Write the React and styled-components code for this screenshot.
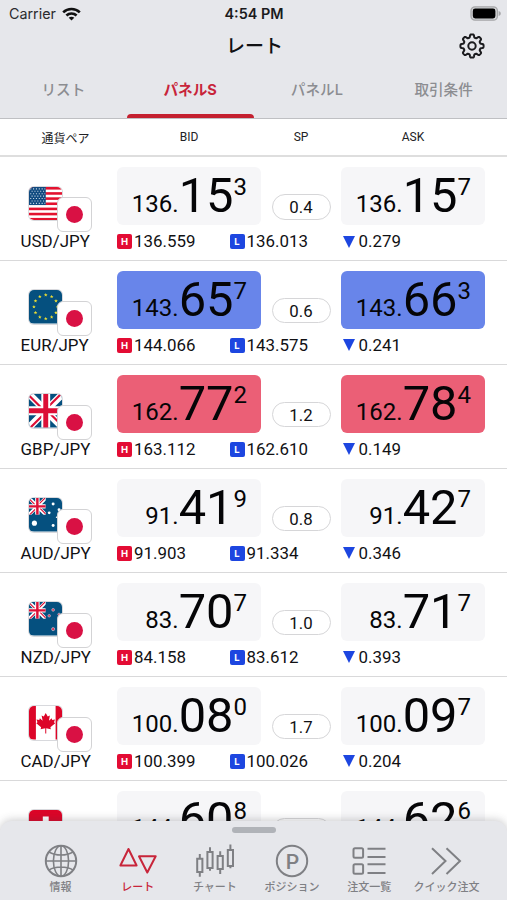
import React from 'react';
import styled, { createGlobalStyle } from 'styled-components';

const GlobalStyle = createGlobalStyle`
    * {
        box-sizing: border-box;
    }

    body {
        margin: 0;
        background: #ffffff;
        font-family: Roboto, 'Noto Sans CJK JP', sans-serif;
        color: #111114;
    }
`;

const Screen = styled.div`
    position: relative;
    width: 507px;
    height: 900px;
    overflow: hidden;
    background: #ffffff;
`;

const Header = styled.header`
    height: 119px;
    background: #e6e7eb;
    border-bottom: 1px solid #bfc0c3;
`;

const StatusBar = styled.div`
    height: 27px;
    padding: 0 6px 0 9px;
    display: grid;
    grid-template-columns: 1fr auto 1fr;
    align-items: center;
    font-family: Inter, sans-serif;
    font-size: 14px;
    line-height: 27px;
`;

const Carrier = styled.span`
    display: flex;
    align-items: center;
    gap: 6px;
    font-size: 14.3px;
    color: #2b2b2e;
`;

const Clock = styled.span`
    font-weight: 600;
    font-size: 14.4px;
    color: #1b1b1d;
    margin-right: 2px;
`;

const BatteryIcon = styled.svg`
    justify-self: end;
`;

const TitleBar = styled.div`
    height: 37px;
    padding: 0 22px;
    display: grid;
    grid-template-columns: 26px 1fr 26px;
    align-items: center;
`;

const Title = styled.h1`
    grid-column: 2;
    margin: 0;
    padding: 1px 0 0 2px;
    text-align: center;
    font-size: 19px;
    font-weight: 500;
    line-height: 37px;
`;

const Tabs = styled.nav`
    height: 54px;
    display: grid;
    grid-template-columns: repeat(4, 1fr);
`;

const Tab = styled.a`
    display: flex;
    flex-direction: column;
    justify-content: space-between;
    text-align: center;
    font-family: Inter, 'Noto Sans CJK JP', sans-serif;
    font-size: 14.6px;
    font-weight: ${(props) => (props.$active ? 700 : 500)};
    line-height: 52px;
    color: ${(props) => (props.$active ? '#c8253a' : '#8c8d91')};

    &::after {
        content: '';
        height: 4px;
        margin-top: -2px;
        border-radius: 4px 4px 0 0;
        background: ${(props) => (props.$active ? '#c4202f' : 'transparent')};
    }
`;

const ColumnHeads = styled.div`
    height: 38px;
    display: grid;
    grid-template-columns: 117px 144px 80px 144px;
    align-items: center;
    text-align: center;
    font-size: 12px;
    color: #222225;
    border-bottom: 2px solid #dedede;

    span:first-child {
        padding-left: 14px;
    }
`;

const Row = styled.div`
    height: 103.95px;
    padding-top: 10px;
    display: grid;
    grid-template-columns: 96px 144px 80px 144px;
    grid-template-rows: 58px 33px;
    padding-left: 21px;
    border-bottom: 1.5px solid #d9d9da;
`;

const Flags = styled.div`
    padding: 19.5px 0 0 7.5px;
    display: flex;
    align-items: flex-start;
`;

const QuoteFlag = styled.span`
    margin: 10.5px 0 0 -5.5px;
    width: 35px;
    height: 35px;
    border: 1.5px solid #d3d3d5;
    border-radius: 6px;
    background: #ffffff;
    display: flex;
    align-items: center;
    justify-content: center;

    &::before {
        content: '';
        width: 17px;
        height: 17px;
        border-radius: 50%;
        background: #d91144;
    }
`;

const tones = {
    flat: '#f6f6f8',
    down: '#6885ea',
    up: '#eb5f76'
};

const Price = styled.div`
    height: 58px;
    padding-right: 14px;
    border-radius: 6px;
    background: ${(props) => tones[props.$tone]};
    display: flex;
    justify-content: flex-end;
    align-items: flex-start;
    color: #050507;
`;

const Base = styled.span`
    font-size: 24px;
    line-height: 28px;
    padding-top: 23px;
`;

const Pips = styled.span`
    font-size: 48.8px;
    line-height: 58px;
`;

const Fraction = styled.span`
    font-size: 24px;
    line-height: 28px;
    padding-top: 6px;
`;

const Spread = styled.span`
    justify-self: center;
    margin-top: 27px;
    width: 59px;
    height: 25.5px;
    border: 1.5px solid #d6d6d8;
    border-radius: 13px;
    text-align: center;
    font-size: 16.8px;
    line-height: 24px;
    background: #ffffff;
`;

const Pair = styled.span`
    font-size: 16.9px;
    line-height: 33px;
    margin-left: -0.4px;
    white-space: nowrap;
`;

const HighLow = styled.div`
    grid-column: 2 / 4;
    display: grid;
    grid-template-columns: 112.5px 1fr;
    line-height: 33px;
`;

const Stat = styled.span`
    display: flex;
    align-items: center;
    gap: ${(props) => props.$gap || 2}px;
    padding-left: ${(props) => props.$indent || 0}px;
    font-size: 16.9px;
    line-height: 33px;
`;

const Badge = styled.i`
    width: 15px;
    height: 15px;
    border-radius: 2px;
    background: ${(props) => props.$color};
    color: #ffffff;
    font: 700 9.5px/15px Inter, sans-serif;
    text-align: center;
`;

const DownMark = styled.i`
    border: 6.2px solid transparent;
    border-top: 12px solid #1d46e0;
    border-bottom: 0;
`;

const BottomSheet = styled.footer`
    position: absolute;
    left: 0;
    right: 0;
    bottom: 0;
    height: 79.5px;
    padding: 6px 22px 0;
    border-radius: 12px 12px 0 0;
    background: #e6e7eb;
    box-shadow: 0 -1px 8px rgba(60, 62, 70, 0.28);
`;

const Handle = styled.div`
    width: 44px;
    height: 6px;
    margin: 0 auto;
    border-radius: 3px;
    background: #b0b3b8;
`;

const Menu = styled.div`
    margin-top: 10px;
    display: grid;
    grid-template-columns: repeat(6, 1fr);
`;

const MenuItem = styled.a`
    display: flex;
    flex-direction: column;
    align-items: center;
    font-size: 11px;
    font-weight: 500;
    line-height: 17px;
    white-space: nowrap;
    color: ${(props) => (props.$active ? '#c8253a' : '#7f8084')};

    svg {
        width: 40px;
        height: 36px;
        fill: none;
        stroke: currentColor;
        stroke-width: 2;
    }
`;

const Wifi = () => (
    <svg width="19" height="14" viewBox="0 0 19 14" fill="none" stroke="#111" strokeWidth="2.6">
        <path d="M1.2 5.4C5.8.9 13.2.9 17.8 5.4" />
        <path d="M4.4 8.5c2.9-2.7 7.3-2.7 10.2 0" />
        <path d="M9.5 13.6 6.7 10.8c1.6-1.4 4-1.4 5.6 0z" fill="#111" stroke="none" />
    </svg>
);

const Battery = () => (
    <BatteryIcon width="31" height="15" viewBox="0 0 31 15">
        <rect x="1" y="0.8" width="26.4" height="13.4" rx="4" fill="#d3d4d6" stroke="#a6a7a9" strokeWidth="1.3" />
        <rect x="2.8" y="2.6" width="22.6" height="9.8" rx="2.4" fill="#000" />
        <path d="M28.6 5v5c1.6-.6 2.2-1.5 2.2-2.5s-.6-1.9-2.2-2.5z" fill="#a6a7a9" />
    </BatteryIcon>
);

// eight rounded teeth around the hub
const gearPath = () => {

    const points = [];

    for (let i = 0; i < 160; i++) {
        const a = (i / 160) * Math.PI * 2;
        const wave = Math.tanh(2.4 * Math.cos(a * 8) + 0.2);
        const r = 10.1 + 1.5 * wave;
        points.push(`${(13 + r * Math.sin(a)).toFixed(2)} ${(13 - r * Math.cos(a)).toFixed(2)}`);
    }

    return `M${points.join('L')}Z`;
};

const Gear = () => (
    <svg width="26" height="26" viewBox="0 0 26 26" fill="none" stroke="#1b1b1e" strokeWidth="2" strokeLinejoin="round">
        <path d={gearPath()} />
        <circle cx="13" cy="13" r="3.7" />
    </svg>
);

const UnionJack = () => (
    <g>
        <rect width="34" height="34" fill="#05507f" />
        <path d="M0 0l34 34M34 0L0 34" stroke="#fff" strokeWidth="7" />
        <path d="M0 1.5l13 13M34 32.5l-13-13M32.5 0l-13 13M1.5 34l13-13" stroke="#dc0f36" strokeWidth="2.2" />
        <path d="M17 0v34M0 17h34" stroke="#fff" strokeWidth="9" />
        <path d="M17 0v34M0 17h34" stroke="#dc0f36" strokeWidth="5" />
    </g>
);

const SouthernFlag = ({ children }) => (
    <g>
        <rect width="34" height="34" fill="#05507f" />
        <svg width="17" height="17" viewBox="0 0 34 34"><UnionJack /></svg>
        {children}
    </g>
);

const flagArt = {
    USD: (
        <g>
            <rect width="34" height="34" fill="#fff" />
            {[0, 1, 2, 3, 4, 5, 6].map((i) => (
                <rect key={i} y={i * 5.23} width="34" height="2.62" fill="#e3122f" />
            ))}
            <rect width="17" height="18.3" fill="#114b80" />
            {[0, 1, 2, 3, 4, 5, 6].map((i) => (
                <path
                    key={i}
                    d={`M${i % 2 ? 2.6 : 1.2} ${1.9 + i * 2.45}H16.5`}
                    stroke="#c5d5e3"
                    strokeWidth="1.1"
                    strokeDasharray="1.1 1.8" />
            ))}
        </g>
    ),
    EUR: (
        <g>
            <rect width="34" height="34" fill="#05507f" />
            {[...Array(12).keys()].map((i) => (
                <path
                    key={i}
                    transform={`translate(${17 + 12 * Math.sin(i * Math.PI / 6)} ${17 - 12 * Math.cos(i * Math.PI / 6)})`}
                    d="M0-1.9L.5-.6 1.9-.5.8.3 1.2 1.6 0 .9-1.2 1.6-.8.3-1.9-.5-.5-.6z"
                    fill="#eadc35" />
            ))}
        </g>
    ),
    GBP: <UnionJack />,
    AUD: (
        <SouthernFlag>
            <g fill="#fff">
                <circle cx="5.5" cy="25.5" r="2.6" />
                <circle cx="24.5" cy="6" r="1.5" />
                <circle cx="30.5" cy="12" r="1.5" />
                <circle cx="20.5" cy="15" r="1.4" />
                <circle cx="28" cy="19.5" r=".8" />
                <circle cx="24.5" cy="28" r="1.5" />
            </g>
        </SouthernFlag>
    ),
    NZD: (
        <SouthernFlag>
            <g fill="#d92c51" stroke="#b9c9d8" strokeWidth=".7">
                <circle cx="24.5" cy="8" r="1.4" />
                <circle cx="30.5" cy="12.5" r="1.2" />
                <circle cx="20.5" cy="14" r="1.3" />
                <circle cx="24.5" cy="27.5" r="1.6" />
            </g>
        </SouthernFlag>
    ),
    CAD: (
        <g>
            <rect width="34" height="34" fill="#fff" />
            <path d="M0 0h7v34H0zM27 0h7v34h-7z" fill="#dc0528" />
            <path
                d="M17 7l2 3.6 2.2-1-1 5.4 2.8-2.6.6 1.7 2.8-.5-1 3 1.2.8-4.9 4.2.5 1.9-4.7-.8V28h-1v-5.3l-4.7.8.5-1.9-4.9-4.2 1.2-.8-1-3 2.8.5.6-1.7 2.8 2.6-1-5.4 2.2 1z"
                fill="#dc0528" />
        </g>
    ),
    CHF: (
        <g>
            <rect width="34" height="34" fill="#dc0528" />
            <path d="M14 6.5h6V14h7.5v6H20v7.5h-6V20H6.5v-6H14z" fill="#fff" />
        </g>
    )
};

const BaseFlag = styled.svg`
    flex: none;
    width: 33.5px;
    height: 33.5px;
    border-radius: 5px;
    box-shadow: 0 0 0 1px rgba(190, 192, 198, 0.6);
`;

const rates = [
    { code: 'USD', tone: 'flat', bid: ['136.', '15', '3'], sp: '0.4', ask: ['136.', '15', '7'], high: '136.559', low: '136.013', diff: '0.279' },
    { code: 'EUR', tone: 'down', bid: ['143.', '65', '7'], sp: '0.6', ask: ['143.', '66', '3'], high: '144.066', low: '143.575', diff: '0.241' },
    { code: 'GBP', tone: 'up', bid: ['162.', '77', '2'], sp: '1.2', ask: ['162.', '78', '4'], high: '163.112', low: '162.610', diff: '0.149' },
    { code: 'AUD', tone: 'flat', bid: ['91.', '41', '9'], sp: '0.8', ask: ['91.', '42', '7'], high: '91.903', low: '91.334', diff: '0.346' },
    { code: 'NZD', tone: 'flat', bid: ['83.', '70', '7'], sp: '1.0', ask: ['83.', '71', '7'], high: '84.158', low: '83.612', diff: '0.393' },
    { code: 'CAD', tone: 'flat', bid: ['100.', '08', '0'], sp: '1.7', ask: ['100.', '09', '7'], high: '100.399', low: '100.026', diff: '0.204' },
    { code: 'CHF', tone: 'flat', bid: ['144.', '60', '8'], ask: ['144.', '62', '6'] }
];

const PriceBox = ({ tone, value }) => (
    <Price $tone={tone}>
        <Base>{value[0]}</Base>
        <Pips>{value[1]}</Pips>
        <Fraction>{value[2]}</Fraction>
    </Price>
);

const RateRow = ({ rate }) => (
    <Row>
        <Flags>
            <BaseFlag viewBox="0 0 34 34">{flagArt[rate.code]}</BaseFlag>
            {rate.high && <QuoteFlag />}
        </Flags>
        <PriceBox tone={rate.tone} value={rate.bid} />
        <Spread>{rate.sp}</Spread>
        <PriceBox tone={rate.tone} value={rate.ask} />
        {rate.high && (
            <>
                <Pair>{rate.code}/JPY</Pair>
                <HighLow>
                    <Stat><Badge $color="#e30c34">H</Badge>{rate.high}</Stat>
                    <Stat><Badge $color="#1d46e0">L</Badge>{rate.low}</Stat>
                </HighLow>
                <Stat $gap={3.5} $indent={2}><DownMark />{rate.diff}</Stat>
            </>
        )}
    </Row>
);

const menu = [
    {
        label: '情報',
        icon: (
            <svg viewBox="0 0 40 36">
                <circle cx="20" cy="18" r="15.2" />
                <ellipse cx="20" cy="18" rx="7.6" ry="15.2" strokeWidth="1.6" />
                <path d="M20 3v30M5 18h30M8 9c6.5 4 17.5 4 24 0M8 27c6.5-4 17.5-4 24 0" strokeWidth="1.6" />
            </svg>
        )
    },
    {
        label: 'レート',
        active: true,
        icon: (
            <svg viewBox="0 0 40 36" strokeLinejoin="round">
                <path d="M10.5 6 2.4 22.5h16.2zM21 13.3h16.7L29.3 29.5z" />
            </svg>
        )
    },
    {
        label: 'チャート',
        icon: (
            <svg viewBox="0 0 40 36">
                <path d="M2.2 15.7h5.2v13.4H2.2zM12.4 8.9h5.2v16.2h-5.2zM22.6 12.9h5.2v13.2h-5.2zM32.8 6.9H38v16h-5.2z" />
                <path d="M4.8 11v5M4.8 29v4.7M15 4.3v5M15 25v2.7M25.2 8.3v5M25.2 26v5M35.4 1.5v5M35.4 23v2.2" />
            </svg>
        )
    },
    {
        label: 'ポジション',
        icon: (
            <svg viewBox="0 0 40 36">
                <circle cx="20" cy="18" r="15.2" />
                <text x="20.5" y="25.5" textAnchor="middle" fontFamily="Roboto" fontSize="21" fill="currentColor" stroke="none">P</text>
            </svg>
        )
    },
    {
        label: '注文一覧',
        icon: (
            <svg viewBox="0 0 40 36">
                <rect x="4.5" y="5.2" width="9.6" height="9.6" rx="1.5" />
                <rect x="4.5" y="21.2" width="9.6" height="9.6" rx="1.5" />
                <path d="M18.5 5.7h18M18.5 14h18M18.5 21.3h18M18.5 30h18" />
            </svg>
        )
    },
    {
        label: 'クイック注文',
        icon: (
            <svg viewBox="0 0 40 36">
                <path d="M6 5.2 19.5 18 6 31M20.5 5.2 34 18 20.5 31" />
            </svg>
        )
    }
];

const App = () => (
    <Screen>
        <GlobalStyle />
        <Header>
            <StatusBar>
                <Carrier>Carrier<Wifi /></Carrier>
                <Clock>4:54 PM</Clock>
                <Battery />
            </StatusBar>
            <TitleBar>
                <Title>レート</Title>
                <Gear />
            </TitleBar>
            <Tabs>
                <Tab>リスト</Tab>
                <Tab $active>パネルS</Tab>
                <Tab>パネルL</Tab>
                <Tab>取引条件</Tab>
            </Tabs>
        </Header>
        <ColumnHeads>
            <span>通貨ペア</span>
            <span>BID</span>
            <span>SP</span>
            <span>ASK</span>
        </ColumnHeads>
        {rates.map((rate) => <RateRow key={rate.code} rate={rate} />)}
        <BottomSheet>
            <Handle />
            <Menu>
                {menu.map((item) => (
                    <MenuItem key={item.label} $active={item.active}>
                        {item.icon}
                        {item.label}
                    </MenuItem>
                ))}
            </Menu>
        </BottomSheet>
    </Screen>
);

export default App;
